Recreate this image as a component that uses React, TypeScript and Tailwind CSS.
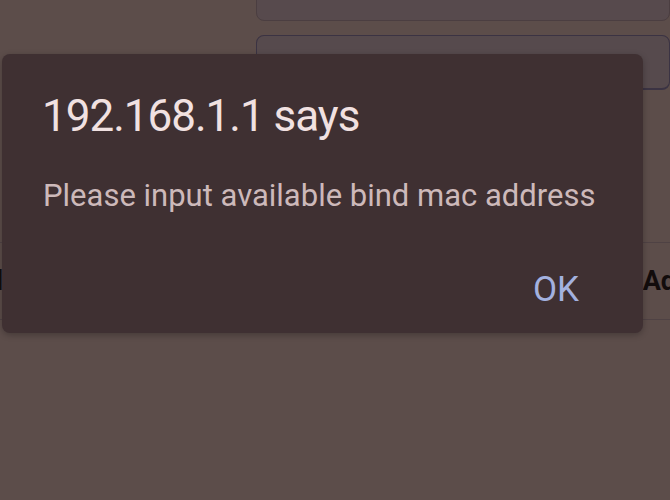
import React from 'react';

export default function App() {
  return (
    <div className="relative w-[670px] h-[500px] overflow-hidden bg-[#5c4d4a] font-['Roboto',sans-serif]">
      {/* page underneath the dialog */}
      <div className="flex flex-col">
        <div className="ml-[256px] -mt-[10px] h-[31px] rounded-b-[8px] border border-[#4b3e41] bg-[#574a4d]" />
        <div className="ml-[256px] mt-[14px] h-[55px] rounded-[8px] border border-[#3b3343] border-b-2 bg-[#564a4d]" />
        <div className="mt-[152px] h-px bg-[#4f4244]" />
        <div className="flex h-[76px] items-center justify-between">
          <span className="-ml-[4px] text-[27px] font-bold text-[#120c0c]">l</span>
          <span className="mr-[-6px] text-[27px] font-bold text-[#120c0c]">Ad</span>
        </div>
        <div className="h-px bg-[#4f4244]" />
      </div>

      {/* alert dialog */}
      <div className="absolute left-[2px] top-[54px] flex h-[279px] w-[641px] flex-col rounded-[8px] bg-[#3f3032] shadow-[0_2px_6px_rgba(0,0,0,0.25)]">
        <h1 className="mt-[40px] ml-[40px] text-[44px] leading-none tracking-[-1px] text-[#f1e1e1]">
          192.168.1.1 says
        </h1>
        <p className="mt-[42px] ml-[41px] text-[31px] leading-none text-[#cdb9ba]">
          Please input available bind mac address
        </p>
        <div className="mt-auto mb-[26px] flex justify-end pr-[64px]">
          <span className="text-[35px] leading-none text-[#a3b1df]">OK</span>
        </div>
      </div>
    </div>
  );
}
